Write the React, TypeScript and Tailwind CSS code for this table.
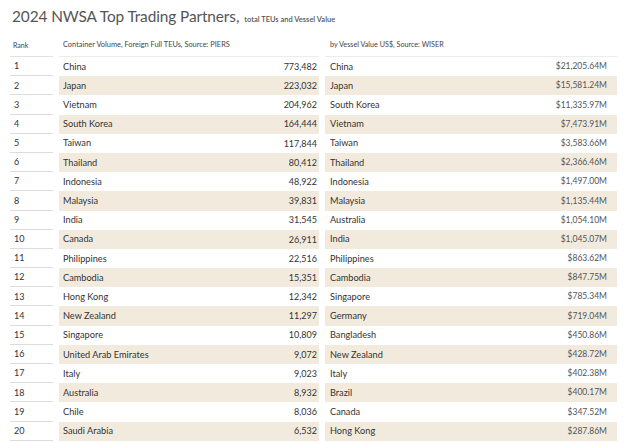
const ROWS: [string, string, string, string][] = [
  ["China", "773,482", "China", "$21,205.64M"],
  ["Japan", "223,032", "Japan", "$15,581.24M"],
  ["Vietnam", "204,962", "South Korea", "$11,335.97M"],
  ["South Korea", "164,444", "Vietnam", "$7,473.91M"],
  ["Taiwan", "117,844", "Taiwan", "$3,583.66M"],
  ["Thailand", "80,412", "Thailand", "$2,366.46M"],
  ["Indonesia", "48,922", "Indonesia", "$1,497.00M"],
  ["Malaysia", "39,831", "Malaysia", "$1,135.44M"],
  ["India", "31,545", "Australia", "$1,054.10M"],
  ["Canada", "26,911", "India", "$1,045.07M"],
  ["Philippines", "22,516", "Philippines", "$863.62M"],
  ["Cambodia", "15,351", "Cambodia", "$847.75M"],
  ["Hong Kong", "12,342", "Singapore", "$785.34M"],
  ["New Zealand", "11,297", "Germany", "$719.04M"],
  ["Singapore", "10,809", "Bangladesh", "$450.86M"],
  ["United Arab Emirates", "9,072", "New Zealand", "$428.72M"],
  ["Italy", "9,023", "Italy", "$402.38M"],
  ["Australia", "8,932", "Brazil", "$400.17M"],
  ["Chile", "8,036", "Canada", "$347.52M"],
  ["Saudi Arabia", "6,532", "Hong Kong", "$287.86M"],
];

export default function App() {
  return (
    <div className="w-[624px] h-[443px] overflow-hidden bg-white font-['Lato',sans-serif] text-[#333]">
      <div className="flex items-baseline pl-[12px] pt-[5px] h-[34px]">
        <span className="text-[15.4px] text-[#555] tracking-[-0.1px]">2024 NWSA Top Trading Partners,</span>
        <span className="ml-[5px] text-[7.5px] font-semibold text-[#555]">total TEUs and Vessel Value</span>
      </div>

      <div className="grid grid-cols-[43px_260px_292px] gap-x-[6px] pl-[10px]">
        {/* headers */}
        <div className="h-[23px] flex items-center pl-[3px] text-[7px] text-[#444] border-b border-[#e2e2e2]">Rank</div>
        <div className="h-[23px] flex items-center pl-[4px] text-[7.4px] text-[#444] border-b border-[#ececec]">
          Container Volume, Foreign Full TEUs, Source: PIERS
        </div>
        <div className="h-[23px] flex items-center pl-[5px] text-[7.2px] text-[#444] border-b border-[#ececec]">
          by Vessel Value US$, Source: WISER
        </div>

        {ROWS.map((r, i) => {
          const band = i % 2 === 1 ? "bg-[#f2ebdd]" : "";
          return (
            <div key={i} className="contents">
              <div className="h-[19.2px] flex items-center pl-[4px] text-[9px] border-b border-[#dcdcdc]">{i + 1}</div>
              <div className={`h-[19.2px] flex items-center justify-between pl-[4px] pr-[2px] text-[9.2px] ${band}`}>
                <span>{r[0]}</span>
                <span className="text-[9px]">{r[1]}</span>
              </div>
              <div className={`h-[19.2px] flex items-center justify-between pl-[5px] pr-[10px] text-[9.2px] ${band}`}>
                <span>{r[2]}</span>
                <span className="text-[8.5px] text-[#555]">{r[3]}</span>
              </div>
            </div>
          );
        })}
      </div>
    </div>
  );
}
